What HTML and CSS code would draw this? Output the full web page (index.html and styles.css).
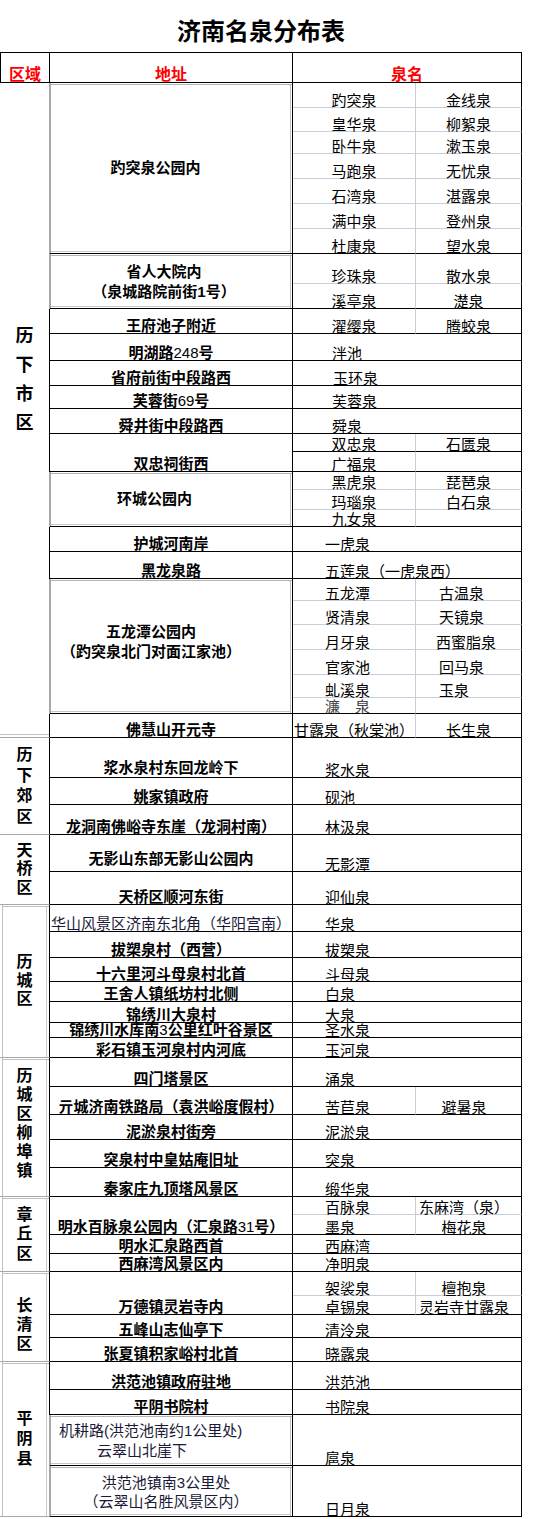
FILE: index.html
```html
<!DOCTYPE html>
<html lang="zh-CN">
<head>
<meta charset="utf-8">
<title>济南名泉分布表</title>
<link rel="stylesheet" href="styles.css">
</head>
<body>
<h1 class="title">济南名泉分布表</h1>
<div class="sheet">
  <div class="hd hd-area">区域</div>
  <div class="hd">地址</div>
  <div class="hd hd-name">泉名</div>

  <!-- 历下市区 -->
  <div class="area rs28 lx"><span>历</span><span>下</span><span>市</span><span>区</span></div>
  <div class="addr rs7 mid gbox pr31">趵突泉公园内</div>
  <div class="sp c">趵突泉</div><div class="sp c r">金线泉</div>
  <div class="sp c">皇华泉</div><div class="sp c r">柳絮泉</div>
  <div class="sp c">卧牛泉</div><div class="sp c r">漱玉泉</div>
  <div class="sp c">马跑泉</div><div class="sp c r">无忧泉</div>
  <div class="sp c">石湾泉</div><div class="sp c r">湛露泉</div>
  <div class="sp c">满中泉</div><div class="sp c r">登州泉</div>
  <div class="sp c e">杜康泉</div><div class="sp c r e">望水泉</div>

  <div class="addr rs2 mid gbox pr14 lh20"><span>省人大院内</span><span>（泉城路院前街1号）</span></div>
  <div class="sp c">珍珠泉</div><div class="sp c r">散水泉</div>
  <div class="sp c e">溪亭泉</div><div class="sp c r e">濋泉</div>

  <div class="addr">王府池子附近</div>
  <div class="sp c e">濯缨泉</div><div class="sp c r e">腾蛟泉</div>

  <div class="addr"><span>明湖路<i class="n">248</i>号</span></div>
  <div class="s p39">泮池</div>
  <div class="addr">省府前街中段路西</div>
  <div class="s p40">玉环泉</div>
  <div class="addr"><span>芙蓉街<i class="n">69</i>号</span></div>
  <div class="s p39">芙蓉泉</div>
  <div class="addr">舜井街中段路西</div>
  <div class="s p39">舜泉</div>

  <div class="addr rs2">双忠祠街西</div>
  <div class="sp c e">双忠泉</div><div class="sp c r e">石匮泉</div>
  <div class="sp c e">广福泉</div><div class="sp r e"></div>

  <div class="addr rs3 mid gbox pr33">环城公园内</div>
  <div class="sp c">黑虎泉</div><div class="sp c r">琵琶泉</div>
  <div class="sp c">玛瑙泉</div><div class="sp c r">白石泉</div>
  <div class="sp c e">九女泉</div><div class="sp r e"></div>

  <div class="addr">护城河南岸</div>
  <div class="s p32">一虎泉</div>
  <div class="addr">黑龙泉路</div>
  <div class="s p32">五莲泉（一虎泉西）</div>

  <div class="addr rs6 mid gbox pr40 lh20 up6"><span>五龙潭公园内</span><span>（趵突泉北门对面江家池）</span></div>
  <div class="sp l">五龙潭</div><div class="sp l4 r">古温泉</div>
  <div class="sp l">贤清泉</div><div class="sp l4 r">天镜泉</div>
  <div class="sp l">月牙泉</div><div class="sp l4 r x3">西蜜脂泉</div>
  <div class="sp l">官家池</div><div class="sp l4 r">回马泉</div>
  <div class="sp l">虬溪泉</div><div class="sp l4 r">玉泉</div>
  <div class="sp l e gray">濂　泉</div><div class="sp r e"></div>

  <div class="addr">佛慧山开元寺</div>
  <div class="sp e p1">甘露泉（秋棠池）</div><div class="sp c r e">长生泉</div>

  <!-- 历下郊区 -->
  <div class="area rs3 lh205"><span>历</span><span>下</span><span>郊</span><span>区</span></div>
  <div class="addr pb2">浆水泉村东回龙岭下</div>
  <div class="s p32">浆水泉</div>
  <div class="addr">姚家镇政府</div>
  <div class="s p32">砚池</div>
  <div class="addr">龙洞南佛峪寺东崖（龙洞村南）</div>
  <div class="s p32">林汲泉</div>

  <!-- 天桥区 -->
  <div class="area rs2 lh18"><span>天</span><span>桥</span><span>区</span></div>
  <div class="addr pb6">无影山东部无影山公园内</div>
  <div class="s p32">无影潭</div>
  <div class="addr">天桥区顺河东街</div>
  <div class="s p32">迎仙泉</div>

  <!-- 历城区 -->
  <div class="area rs7 lh18 gb"><span>历</span><span>城</span><span>区</span></div>
  <div class="addr reg">华山风景区济南东北角（华阳宫南）</div>
  <div class="s p32">华泉</div>
  <div class="addr">拔槊泉村（西营）</div>
  <div class="s p32">拔槊泉</div>
  <div class="addr">十六里河斗母泉村北首</div>
  <div class="s p32">斗母泉</div>
  <div class="addr">王舍人镇纸坊村北侧</div>
  <div class="s p32">白泉</div>
  <div class="addr">锦绣川大泉村</div>
  <div class="s p32">大泉</div>
  <div class="addr"><span>锦绣川水库南<i class="n">3</i>公里红叶谷景区</span></div>
  <div class="s p32">圣水泉</div>
  <div class="addr">彩石镇玉河泉村内河底</div>
  <div class="s p32">玉河泉</div>

  <!-- 历城区柳埠镇 -->
  <div class="area rs5 gb up5"><span>历</span><span>城</span><span>区</span><span>柳</span><span>埠</span><span>镇</span></div>
  <div class="addr">四门塔景区</div>
  <div class="s p32">涌泉</div>
  <div class="addr">亓城济南铁路局（袁洪峪度假村）</div>
  <div class="sp e l">苦苣泉</div><div class="sp r e c4">避暑泉</div>
  <div class="addr">泥淤泉村街旁</div>
  <div class="s p32">泥淤泉</div>
  <div class="addr">突泉村中皇姑庵旧址</div>
  <div class="s p32">突泉</div>
  <div class="addr">秦家庄九顶塔风景区</div>
  <div class="s p32">缎华泉</div>

  <!-- 章丘区 -->
  <div class="area rs4 gb lh195"><span>章</span><span>丘</span><span>区</span></div>
  <div class="addr rs2"><span>明水百脉泉公园内（汇泉路<i class="n">31</i>号）</span></div>
  <div class="sp l">百脉泉</div><div class="sp r c4">东麻湾（泉）</div>
  <div class="sp l e">墨泉</div><div class="sp r e c4">梅花泉</div>
  <div class="addr">明水汇泉路西首</div>
  <div class="s p32">西麻湾</div>
  <div class="addr">西麻湾风景区内</div>
  <div class="s p32">净明泉</div>

  <!-- 长清区 -->
  <div class="area rs4 gb dn8"><span>长</span><span>清</span><span>区</span></div>
  <div class="addr rs2">万德镇灵岩寺内</div>
  <div class="sp l">袈裟泉</div><div class="sp r c4">檀抱泉</div>
  <div class="sp l e">卓锡泉</div><div class="sp r e c4">灵岩寺甘露泉</div>
  <div class="addr">五峰山志仙亭下</div>
  <div class="s p32">清泠泉</div>
  <div class="addr">张夏镇积家峪村北首</div>
  <div class="s p32">晓露泉</div>

  <!-- 平阴县 -->
  <div class="area rs4 gb lh20"><span>平</span><span>阴</span><span>县</span></div>
  <div class="addr">洪范池镇政府驻地</div>
  <div class="s p32">洪范池</div>
  <div class="addr">平阴书院村</div>
  <div class="s p32">书院泉</div>
  <div class="addr reg mid gbox left lh20"><span class="ln1">机耕路(洪范池南约1公里处)</span><span class="ln2">云翠山北崖下</span></div>
  <div class="s p32">扈泉</div>
  <div class="addr reg mid gbox pr10 lh19"><span>洪范池镇南3公里处</span><span>（云翠山名胜风景区内）</span></div>
  <div class="s p32">日月泉</div>
</div>
</body>
</html>
```

FILE: styles.css
```css
* { box-sizing: border-box; }
html, body { margin: 0; padding: 0; background: #fff; }
body {
  font-family: "Noto Sans CJK SC", "Noto Sans", sans-serif;
  color: #000;
}
.title {
  margin: 0;
  width: 522px;
  height: 52px;
  padding-top: 17px;
  font-size: 24px;
  line-height: 26px;
  font-weight: 700;
  text-align: center;
}
.sheet {
  display: grid;
  width: 522px;
  grid-template-columns: 50px 243px 123px 106px;
  grid-template-rows:
    31px
    25px 24px 22px 25px 25px 25px 25px
    30px 25px
    25px 27px 25px 23px 25px
    18px 20px
    18px 20px 17px
    25px 27px
    22px 24px 25px 25px 23px 16px
    24px
    40px 27px 30px
    37px 33px
    27px 26px 24px 20px 21px 15px 20px
    29px 28px 25px 28px 29px
    18px 20px 19px 18px
    24px 19px 23px 24px
    28px 25px 51px 51px;
  font-family: "Liberation Sans", "Noto Sans CJK SC", sans-serif;
  font-size: 15px;
  line-height: 12px;
}
.sheet > div {
  display: flex;
  flex-direction: column;
  justify-content: flex-end;
  border-right: 1px solid #000;
  border-bottom: 1px solid #000;
  white-space: nowrap;
  min-width: 0;
  min-height: 0;
}
.n { font-style: normal; font-weight: 400; }

/* header */
.hd {
  color: #ff0000;
  font-weight: 700;
  font-size: 16px;
  line-height: 13px;
  padding-bottom: 1px;
  text-align: center;
  border-top: 1px solid #000;
}
.hd-area { border-left: 1px solid #000; }
.hd-name { grid-column: span 2; }

/* region column */
.area {
  grid-column: 1;
  font-weight: 700;
  font-size: 16px;
  line-height: 19px;
  text-align: center;
  border-bottom-color: #a8a8a8 !important;
  justify-content: center !important;
}
.area.lx {
  justify-content: flex-start !important;
  padding-top: 239px;
  font-size: 18px;
  line-height: 29px;
  box-shadow: inset 0 -2px 0 #fff, inset 0 -3px 0 #c4c4c4;
}
.area.gb {
  box-shadow: inset 2px 0 0 #fff, inset 3px 0 0 #c0c0c0,
              inset 0 1px 0 #fff, inset 0 2px 0 #c0c0c0,
              inset -2px 0 0 #fff, inset -3px 0 0 #c8c8c8;
}
.lh205 { line-height: 20.5px !important; }
.lh18 { line-height: 18.5px !important; }
.lh195 { line-height: 19.5px !important; }
.lh20 { line-height: 20px !important; }
.lh19 { line-height: 19px !important; }
.up5 { padding-bottom: 8px; }
.dn8 { padding-top: 16px; }

.rs2 { grid-row: span 2; }
.rs3 { grid-row: span 3; }
.rs4 { grid-row: span 4; }
.rs5 { grid-row: span 5; }
.rs6 { grid-row: span 6; }
.rs7 { grid-row: span 7; }
.rs28 { grid-row: span 28; }

/* address column */
.addr {
  font-weight: 700;
  text-align: center;
  padding-bottom: 1px;
}
.addr.reg { font-weight: 400; color: #1a1a38; }
.addr.mid { justify-content: center; }
.gbox {
  box-shadow: -1px 0 0 #a8a8a8, inset 1px 0 0 #a8a8a8,
              inset 0 1px 0 #fff, inset 0 2px 0 #b4b4b4,
              inset -1px 0 0 #fff, inset -2px 0 0 #c0c0c0,
              inset 0 -1px 0 #fff, inset 0 -2px 0 #c8c8c8;
}
.pr31 { padding-right: 31px; }
.pr14 { padding-right: 14px; }
.pr33 { padding-right: 33px; }
.pr40 { padding-right: 40px; }
.pr10 { padding-right: 10px; }
.up6 { padding-bottom: 10px; }
.addr.mid.lh20, .addr.mid.lh19 { padding-top: 2px; }
.pb2 { padding-bottom: 3px; }
.pb6 { padding-bottom: 6px; }
.left { text-align: left; }
.ln1 { padding-left: 9px; }
.ln2 { padding-left: 47px; }

/* spring names */
.sp {
  border-right-color: #c6cedb !important;
  border-bottom-color: #c6cedb !important;
}
.sp.r { border-right-color: #000 !important; }
.sp.e { border-bottom-color: #000 !important; }
.c { text-align: center; }
.l { padding-left: 32px; }
.l4 { padding-left: 23px; }
.x3 { padding-left: 20px; }
.c4 { text-align: center; padding-right: 9px; }
.p1 { padding-left: 1px; }
.gray { color: #444; }

.s { grid-column: span 2; }
.p32 { padding-left: 32px; }
.p39 { padding-left: 39px; }
.p40 { padding-left: 40px; }
```
